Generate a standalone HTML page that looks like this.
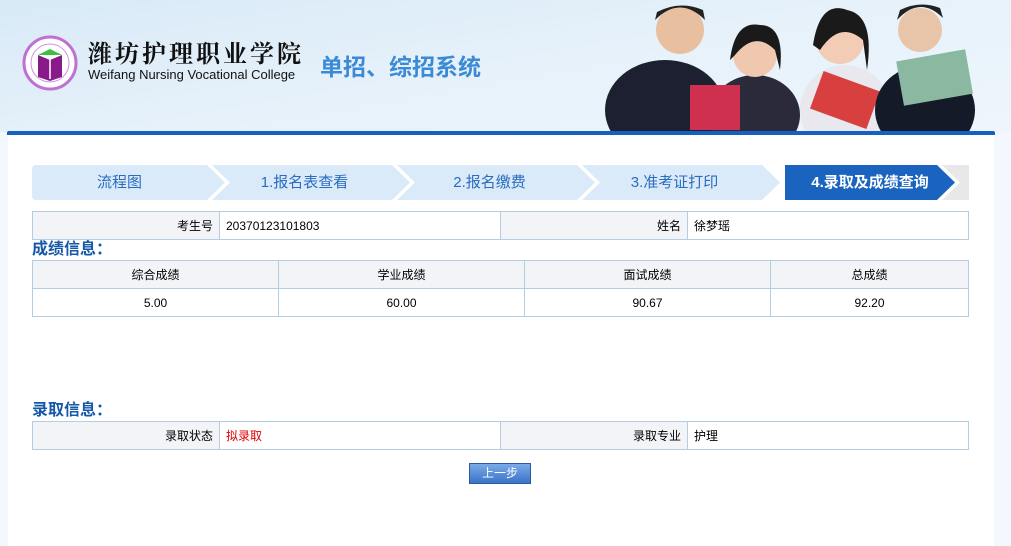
<!DOCTYPE html>
<html><head><meta charset="utf-8"><style>
body{margin:0;width:1011px;height:546px;overflow:hidden;background:#f2f8fd;font-family:"Liberation Sans","Noto Sans CJK SC",sans-serif;position:relative}
.hdr{position:absolute;left:0;top:0;width:1011px;height:132px;background:linear-gradient(170deg,#d8eaf7 0%,#e6f1fa 50%,#eef6fc 100%)}
.bl{position:absolute;left:7px;top:131px;width:988px;height:4px;background:#1560c0;border-radius:2px 2px 0 0}
.main{position:absolute;left:8px;top:135px;width:986px;height:411px;background:#fff}
.abs{position:absolute}
.step{position:absolute;top:165px;height:35px;line-height:36px;text-align:center;font-size:15px;color:#2a6cc0}
table{position:absolute;border-collapse:collapse;font-size:12px;color:#000}
td{border:1px solid #b4cde0;padding:0 6px;height:27px}
.lb{background:#f3f4f8;text-align:right}
.tt{position:absolute;left:32px;font-size:16px;line-height:17px;font-weight:bold;color:#1558a8}
</style></head><body>
<div class="hdr"></div>
<svg class="abs" style="left:22px;top:35px" width="56" height="56"><circle cx="28" cy="28" r="26" fill="#fff" stroke="#c070d0" stroke-width="3"/><circle cx="28" cy="28" r="19" fill="none" stroke="#d090e0" stroke-width="1"/><path d="M16 20 L28 14 L40 20 Z" fill="#3cc040"/><path d="M16 20 L28 25 L40 20 L40 42 L28 46 L16 42 Z" fill="#8a1a8a"/><path d="M28 22 V44" stroke="#fff" stroke-width="1.5"/></svg>
<div class="abs" style="left:88px;top:38px;font-size:24px;line-height:28px;font-weight:bold;letter-spacing:3px;font-family:'Noto Serif CJK SC',serif;color:#111">潍坊护理职业学院</div>
<div class="abs" style="left:88px;top:67px;font-size:13px;color:#111">Weifang Nursing Vocational College</div>
<div class="abs" style="left:320px;top:48px;font-size:23px;font-weight:bold;color:#3a8ad6;font-family:'Noto Sans CJK SC',sans-serif">单招、综招系统</div>
<svg class="abs" style="left:585px;top:0" width="395" height="132"><ellipse cx="80" cy="110" rx="60" ry="50" fill="#1c2030"/><circle cx="95" cy="30" r="24" fill="#e8c0a0"/><path d="M70 20 Q95 -5 120 20 L118 10 Q95 0 72 12Z" fill="#222"/><ellipse cx="170" cy="115" rx="45" ry="40" fill="#2a2a3a"/><circle cx="170" cy="55" r="22" fill="#f0c8b0"/><path d="M145 60 Q150 20 175 25 Q200 25 195 70 L190 50 Q170 30 150 55Z" fill="#1a1a1a"/><rect x="105" y="85" width="50" height="45" fill="#d03050"/><ellipse cx="260" cy="110" rx="45" ry="45" fill="#e8e8ee"/><circle cx="255" cy="40" r="24" fill="#f2ccb4"/><path d="M228 45 Q235 0 262 10 Q290 15 282 70 L278 40 Q255 20 235 50Z" fill="#1a1a1a"/><rect x="230" y="80" width="60" height="40" fill="#d84040" transform="rotate(20 260 100)"/><ellipse cx="340" cy="110" rx="50" ry="45" fill="#151a28"/><circle cx="335" cy="30" r="22" fill="#e8c4a8"/><path d="M312 20 Q335 -5 358 18 L355 8 Q335 0 315 10Z" fill="#222"/><rect x="315" y="55" width="70" height="45" fill="#8ab8a0" transform="rotate(-10 350 80)"/></svg>
<div class="bl"></div>
<div class="main"></div>
<svg class="abs" style="left:32px;top:165px" width="937" height="35">
<path d="M4 0 H175 L193 17.5 L175 35 H4 Q0 35 0 31 V4 Q0 0 4 0Z" fill="#daeaf9"/>
<path d="M180 0 H360 L378 17.5 L360 35 H180 L198 17.5Z" fill="#daeaf9"/>
<path d="M365 0 H545 L563 17.5 L545 35 H365 L383 17.5Z" fill="#daeaf9"/>
<path d="M550 0 H730 L748 17.5 L730 35 H550 L568 17.5Z" fill="#daeaf9"/>
<path d="M753 0 H905 L923 17.5 L905 35 H753Z" fill="#1a64c0"/>
<path d="M910 0 H937 V35 H910 L928 17.5Z" fill="#e8e8e8"/>
</svg>
<div class="step" style="left:32px;width:175px">流程图</div>
<div class="step" style="left:212px;width:185px">1.报名表查看</div>
<div class="step" style="left:397px;width:185px">2.报名缴费</div>
<div class="step" style="left:582px;width:185px">3.准考证打印</div>
<div class="step" style="left:785px;width:170px;color:#fff;font-weight:bold">4.录取及成绩查询</div>
<table style="left:32px;top:211px;width:937px"><tr><td class="lb" style="width:174px">考生号</td><td style="width:268px">20370123101803</td><td class="lb" style="width:174px">姓名</td><td>徐梦瑶</td></tr></table>
<div class="tt" style="top:241px">成绩信息：</div>
<table style="left:32px;top:260px;width:937px;text-align:center"><tr class="lb"><td class="lb" style="text-align:center;width:233px">综合成绩</td><td class="lb" style="text-align:center;width:233px">学业成绩</td><td class="lb" style="text-align:center;width:233px">面试成绩</td><td class="lb" style="text-align:center">总成绩</td></tr><tr><td>5.00</td><td>60.00</td><td>90.67</td><td>92.20</td></tr></table>
<div class="tt" style="top:402px">录取信息：</div>
<table style="left:32px;top:421px;width:937px"><tr><td class="lb" style="width:174px">录取状态</td><td style="width:268px;color:#e00000">拟录取</td><td class="lb" style="width:174px">录取专业</td><td>护理</td></tr></table>
<div class="abs" style="left:469px;top:463px;width:60px;height:19px;border:1px solid #2c5a9c;background:linear-gradient(#7aaae8,#3a74c8);color:#fff;font-size:12px;text-align:center;line-height:19px">上一步</div>
</body></html>
